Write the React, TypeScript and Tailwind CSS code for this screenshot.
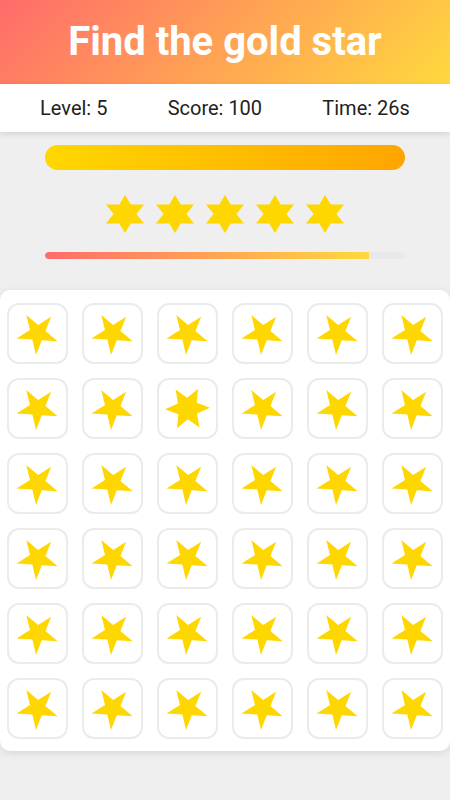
import type { ReactNode } from 'react';

const FIVE_POINT = '50,0 61,35 98,35 68,57 79,91 50,70 21,91 32,57 2,35 39,35';
const SIX_POINT = '50,0 65,25 100,25 80,50 100,75 65,75 50,100 35,75 0,75 20,50 0,25 35,25';

function starPoints(count: number, outer: number, inner: number, offsetDeg: number) {
  const pts: string[] = [];
  for (let i = 0; i < count * 2; i++) {
    const r = i % 2 === 0 ? outer : inner;
    const a = ((offsetDeg + (i * 180) / count) * Math.PI) / 180;
    pts.push(`${(50 + r * Math.sin(a)).toFixed(2)},${(50 - r * Math.cos(a)).toFixed(2)}`);
  }
  return pts.join(' ');
}

const ODD_STAR = starPoints(6, 50, 24, 28);

function Shape({ points, className }: { points: string; className: string }) {
  return (
    <svg viewBox="0 0 100 100" className={className} aria-hidden>
      <polygon points={points} fill="#ffd700" />
    </svg>
  );
}

function Cell({ children }: { children: ReactNode }) {
  return (
    <button
      type="button"
      className="grid h-[61px] place-items-center rounded-[12px] border-2 border-[#ebebeb] bg-white"
    >
      {children}
    </button>
  );
}

export default function App() {
  const cells = Array.from({ length: 36 }, (_, i) => i);
  const oddIndex = 8;

  return (
    <div className="min-h-[800px] bg-[#efefef] font-['Roboto','Liberation_Sans',sans-serif]">
      <header className="flex h-[84px] items-center justify-center bg-[linear-gradient(135deg,#ff6b6b,#ffd93d)]">
        <h1 className="text-[40px] font-bold leading-none text-white">Find the gold star</h1>
      </header>

      <div className="flex h-[48px] items-center justify-around bg-white px-[10px] text-[20px] text-[#222] shadow-[0_2px_6px_rgba(0,0,0,0.12)]">
        <span>Level: 5</span>
        <span>Score: 100</span>
        <span>Time: 26s</span>
      </div>

      <div className="mx-auto mt-[13px] h-[25px] w-[360px] rounded-full bg-[linear-gradient(90deg,#ffd700,#ffa500)]" />

      <div className="mt-[25px] flex justify-center gap-[12px]">
        {[0, 1, 2, 3, 4].map((n) => (
          <Shape key={n} points={SIX_POINT} className="h-[38px] w-[38px]" />
        ))}
      </div>

      <div className="mx-auto mt-[19px] h-[7px] w-[360px] overflow-hidden rounded-full bg-[#e9e9e9]">
        <div className="h-full w-[90%] rounded-l-full bg-[linear-gradient(90deg,#ff6b6b,#ffd93d)]" />
      </div>

      <section className="mt-[31px] rounded-[10px] bg-white px-[7px] pb-[12px] pt-[13px] shadow-[0_2px_8px_rgba(0,0,0,0.1)]">
        <div className="grid grid-cols-6 gap-[14px]">
          {cells.map((i) => (
            <Cell key={i}>
              {i === oddIndex ? (
                <Shape points={ODD_STAR} className="h-[45px] w-[45px]" />
              ) : (
                <Shape points={FIVE_POINT} className="h-[43px] w-[43px] rotate-[184deg]" />
              )}
            </Cell>
          ))}
        </div>
      </section>
    </div>
  );
}
